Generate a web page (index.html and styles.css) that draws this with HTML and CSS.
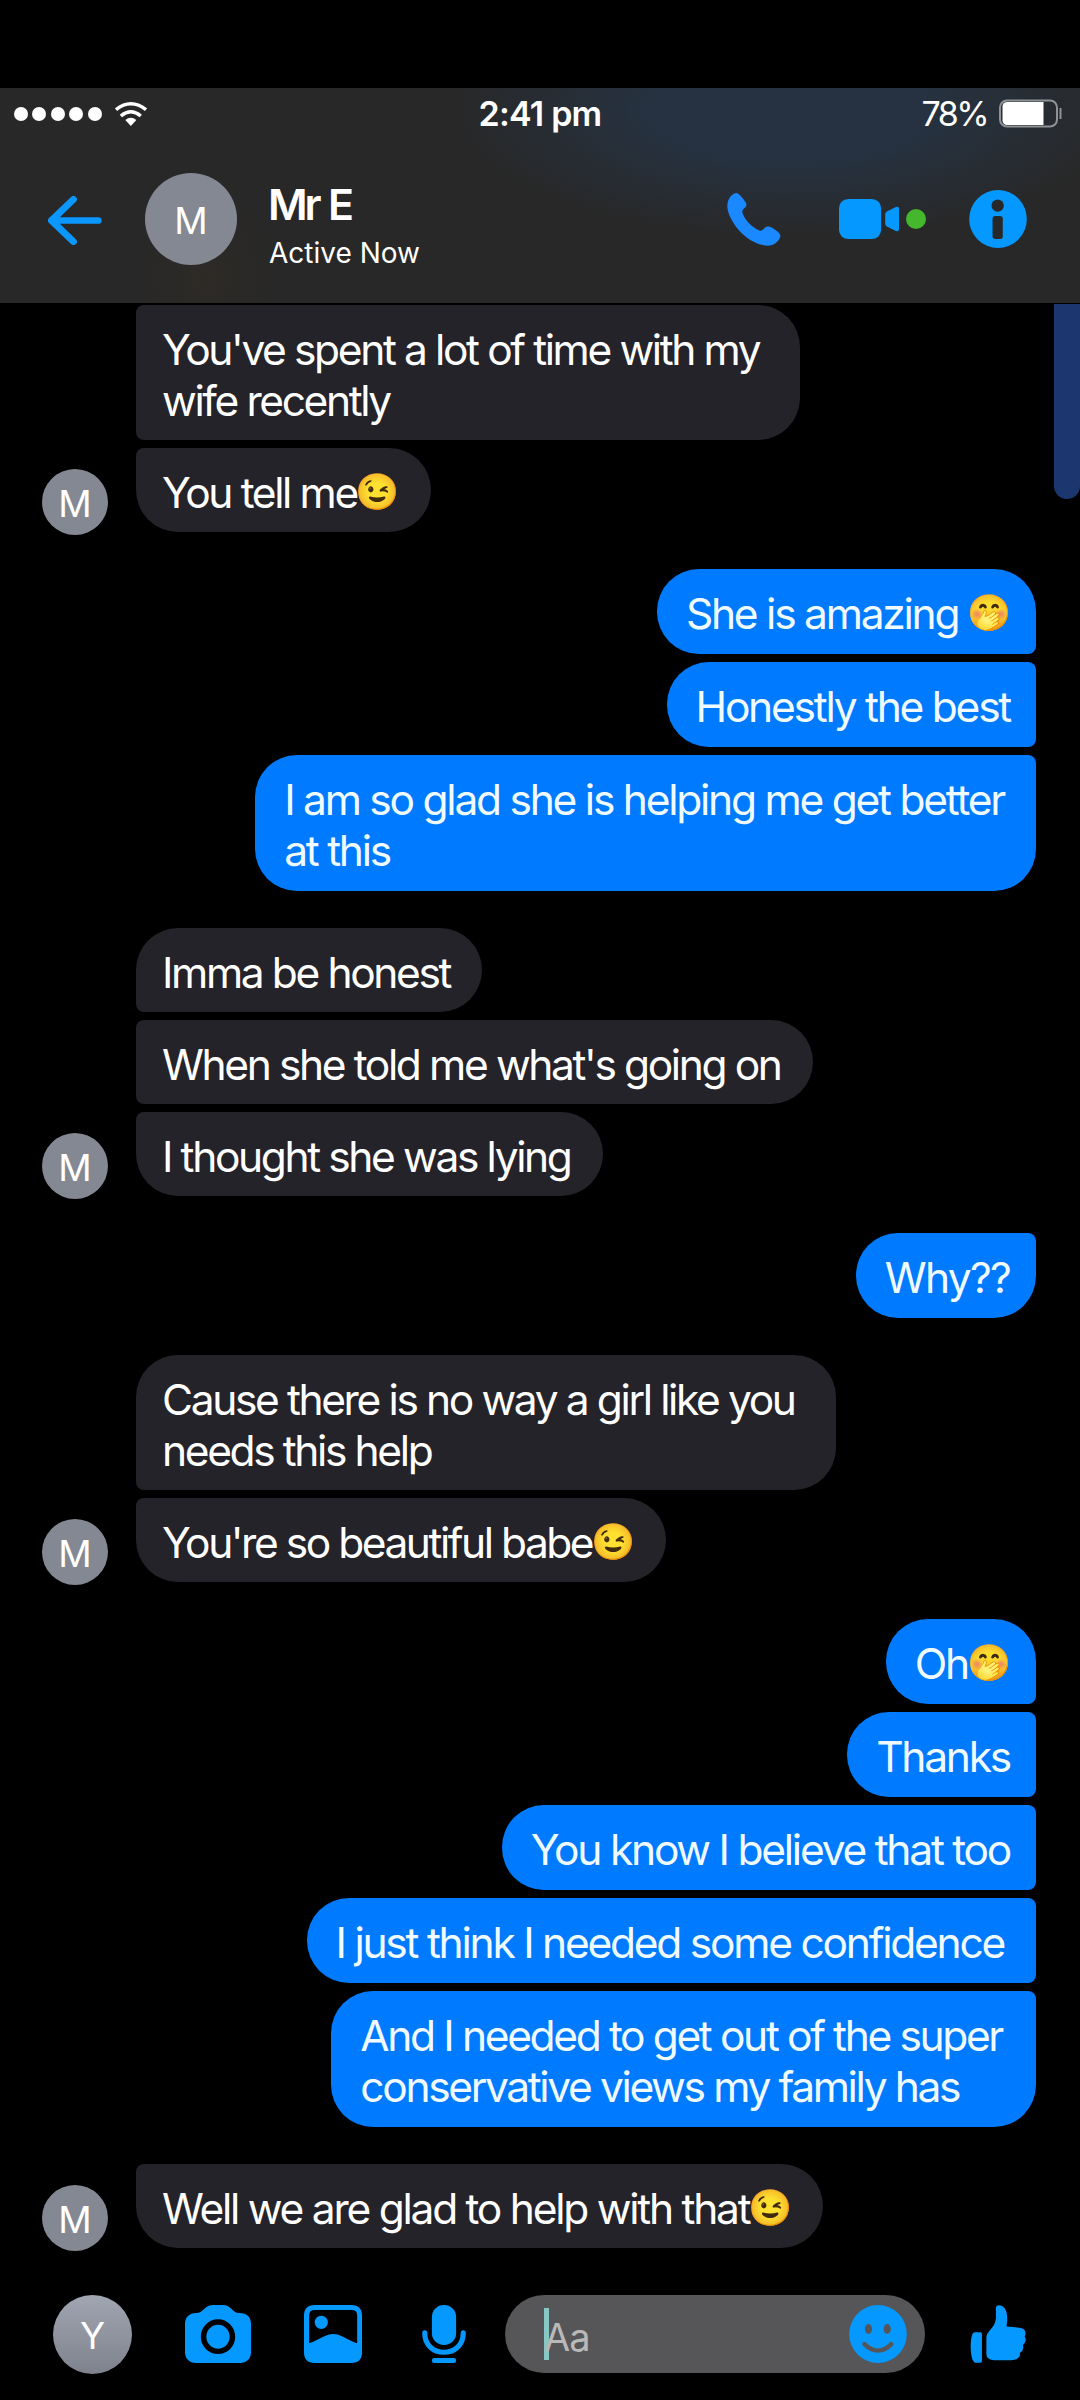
FILE: index.html
```html
<!DOCTYPE html>
<html lang="en">
<head>
<meta charset="utf-8">
<title>Mr E</title>
<link rel="stylesheet" href="styles.css">
</head>
<body>
<div class="phone">
  <header class="header">
    <div class="status">
      <div class="status__left">
        <div class="signal"><i></i><i></i><i></i><i></i><i></i></div>
        <svg class="wifi" viewBox="334 62 93 72" preserveAspectRatio="none" fill="none" stroke="#fff" stroke-width="10">
          <path d="M337 85Q380 50 424 85"/>
          <path d="M351 104Q380 79 409 104"/>
          <path d="M364 116Q380 103 396 116L380 134Z" fill="#fff" stroke="none"/>
        </svg>
      </div>
      <div class="status__time">2:41 pm</div>
      <div class="status__right">
        <span class="percent">78%</span>
        <svg class="battery" viewBox="0 0 64 30" fill="none">
          <rect x="1" y="1.5" width="57" height="26" rx="7" stroke="#8f9396" stroke-width="2"/>
          <path d="M8 3H44.500V26H8A4.500 4.500 0 0 1 3.500 21.500V7.500A4.500 4.500 0 0 1 8 3Z" fill="#fff"/>
          <path d="M61.500 9V20" stroke="#8f9396" stroke-width="2"/>
        </svg>
      </div>
    </div>
    <div class="contact">
      <svg class="back" viewBox="139 348 157 146" preserveAspectRatio="none" fill="none" stroke="#0a97ff" stroke-width="20" stroke-linecap="round" stroke-linejoin="round">
        <path d="M213 358L149 421L213 484M149 421H285"/>
      </svg>
      <div class="avatar avatar--large">M</div>
      <div class="contact__text">
        <div class="contact__name">Mr E</div>
        <div class="contact__state">Active Now</div>
      </div>
      <svg class="call" viewBox="542 336 156 160" preserveAspectRatio="none" fill="#1a88ff">
        <path d="M543 375C543 350 560 336 570 336C577 337 592 357 597 366C600 373 597 378 592 382C587 386 585 391 587 397C595 420 615 440 636 449C641 451 645 448 649 443C655 437 662 436 668 439C680 445 692 455 696 463C699 470 685 495 662 495C620 495 580 460 560 425C548 404 543 388 543 375Z"/>
      </svg>
      <svg class="video" viewBox="868 357 174 121" preserveAspectRatio="none" fill="#0598ff">
        <rect x="868" y="357" width="122" height="121" rx="27"/>
        <path d="M1007 395L1033 381Q1042 378 1042 387V448Q1042 457 1033 454L1007 440Q1002 437 1002 431V404Q1002 398 1007 395Z"/>
      </svg>
      <i class="online"></i>
      <svg class="info" viewBox="1245 330 170 174" preserveAspectRatio="none">
        <ellipse cx="1330" cy="417" rx="84.500" ry="87" fill="#0598ff"/>
        <ellipse cx="1329" cy="377" rx="18" ry="18.500" fill="#272829"/>
        <rect x="1314" y="408" width="30" height="69" rx="8" fill="#272829"/>
      </svg>
    </div>
  </header>

  <main class="thread">
    <i class="scrollbar"></i>
    <section class="group group--in">
      <div class="bubble bubble--joined bubble--wide">You've spent a lot of time with my<br>wife recently</div>
      <div class="bubble">You tell me<span class="emoji">😉</span></div>
      <div class="avatar">M</div>
    </section>
    <section class="group group--out">
      <div class="bubble">She is amazing <span class="emoji">🤭</span></div>
      <div class="bubble">Honestly the best</div>
      <div class="bubble bubble--wide">I am so glad she is helping me get better<br>at this</div>
    </section>
    <section class="group group--in">
      <div class="bubble">Imma be honest</div>
      <div class="bubble">When she told me what's going on</div>
      <div class="bubble">I thought she was lying</div>
      <div class="avatar">M</div>
    </section>
    <section class="group group--out">
      <div class="bubble bubble--loose">Why??</div>
    </section>
    <section class="group group--in">
      <div class="bubble bubble--wide">Cause there is no way a girl like you<br>needs this help</div>
      <div class="bubble bubble--snug">You're so beautiful babe<span class="emoji">😉</span></div>
      <div class="avatar">M</div>
    </section>
    <section class="group group--out">
      <div class="bubble">Oh<span class="emoji">🤭</span></div>
      <div class="bubble">Thanks</div>
      <div class="bubble">You know I believe that too</div>
      <div class="bubble bubble--wide">I just think I needed some confidence</div>
      <div class="bubble bubble--wide bubble--snug">And I needed to get out of the super<br>conservative views my family has</div>
    </section>
    <section class="group group--in">
      <div class="bubble bubble--loose">Well we are glad to help with that<span class="emoji">😉</span></div>
      <div class="avatar">M</div>
    </section>
  </main>

  <footer class="composer">
    <div class="avatar avatar--me">Y</div>
    <svg class="camera" viewBox="537 138 192 174" preserveAspectRatio="none">
      <path fill="#0598ff" d="M570 162C592 162 592 138 620 138H647C673 138 673 162 695 162C718 162 729 175 729 195V280C729 300 716 312 697 312H569C550 312 537 300 537 280V195C537 175 549 162 570 162Z"/>
      <ellipse cx="633" cy="233" rx="42" ry="44" fill="#0598ff" stroke="#000" stroke-width="16"/>
    </svg>
    <svg class="photo" viewBox="883 138 168 174" preserveAspectRatio="none" fill="#0598ff">
      <path fill-rule="evenodd" d="M914 138H1020Q1051 138 1051 170V280Q1051 312 1020 312H914Q883 312 883 280V170Q883 138 914 138ZM914 153Q898 153 898 169V253C925 244 945 225 967 225C992 225 1008 244 1037 253V169Q1037 153 1021 153Z"/>
      <ellipse cx="933" cy="190" rx="19" ry="20"/>
    </svg>
    <svg class="mic" viewBox="1225 138 129 174" preserveAspectRatio="none" fill="#0598ff">
      <rect x="1254" y="138" width="71" height="120" rx="35"/>
      <path d="M1233 221C1233 258 1258 280 1289 280C1321 280 1346 258 1346 221" fill="none" stroke="#0598ff" stroke-width="15" stroke-linecap="round"/>
      <rect x="1254" y="297" width="71" height="15" rx="7"/>
    </svg>
    <div class="field">
      <span class="field__hint">Aa</span>
      <svg class="smile" viewBox="897 135 170 174" preserveAspectRatio="none">
        <ellipse cx="982" cy="222" rx="84.500" ry="87" fill="#0598ff"/>
        <g fill="#565658"><ellipse cx="954" cy="207" rx="10.500" ry="15"/><ellipse cx="1009" cy="207" rx="10.500" ry="15"/></g>
        <path d="M942 252Q960 271 982 272Q1004 271 1021 252" fill="none" stroke="#565658" stroke-width="13" stroke-linecap="round"/>
      </svg>
    </div>
    <svg class="like" viewBox="1251 137 164 176" preserveAspectRatio="none" fill="#0598ff">
      <path d="M1264 220H1281Q1286 220 1286 226V306Q1286 312 1281 312H1266C1249 308 1249 222 1264 220Z"/>
      <path d="M1327 145C1328 136 1338 136 1346 141C1361 151 1362 176 1358 202C1376 203 1390 204 1400 207C1412 210 1417 220 1411 233C1417 241 1414 252 1406 258C1409 270 1404 279 1397 282C1399 298 1389 304 1362 305H1330C1309 305 1299 300 1299 286V238C1299 218 1315 212 1323 193C1330 177 1326 163 1327 145Z"/>
    </svg>
  </footer>
</div>
</body>
</html>
```
FILE: styles.css
```css
* { box-sizing: border-box; }

body {
  margin: 0;
  background: #000;
  color: #fff;
  font-family: Inter, "Liberation Sans", sans-serif;
}

.phone {
  display: flex;
  flex-direction: column;
  width: 1080px;
  height: 2400px;
  padding-top: 88px;
  overflow: hidden;
}

svg { display: block; flex: none; }

/* Header */
.header {
  flex: none;
  height: 215px;
  background:
    radial-gradient(ellipse 75px 110px at 205px 190px, #2d2a26, rgba(45, 42, 38, 0)),
    radial-gradient(ellipse 340px 130px at 790px 20px, #263241 0, #263241 40%, rgba(38, 50, 65, 0) 100%),
    #282828;
}

.status {
  display: grid;
  grid-template-columns: 1fr auto 1fr;
  align-items: center;
  height: 52px;
  padding: 0 17px 0 17px;
  font-size: 34px;
  line-height: 52px;
}

.status__left, .status__right, .signal { display: flex; align-items: center; }
.status__left { margin-left: -3px; }
.signal { gap: 4.4px; }
.signal i { width: 14px; height: 14px; border-radius: 50%; background: #fff; }
.wifi { width: 32px; height: 24px; margin-left: 13px; }
.status__time { font-weight: 600; letter-spacing: -0.8px; }
.status__right { justify-content: flex-end; }
.percent { letter-spacing: -2.6px; margin-right: 12px; }
.battery { width: 64px; height: 30px; }

.contact { display: flex; align-items: center; height: 158px; padding-left: 48px; }
.back { width: 54px; height: 49px; margin-top: 2px; }
.contact .avatar { margin-left: 43px; }
.contact__text { width: 455px; margin-left: 33px; padding-top: 11px; }
.contact__name { margin-left: -2px; font-size: 43px; font-weight: 600; line-height: 52px; letter-spacing: -3.2px; word-spacing: 2px; }
.contact__state { margin-left: -1px; font-size: 28px; line-height: 36px; margin-top: 5px; }
.call { width: 54px; height: 53px; margin-left: 2px; }
.video { width: 60px; height: 40px; margin-left: 58px; }
.online { width: 20px; height: 20px; margin-left: 7px; border-radius: 50%; background: #45b72c; }
.info { width: 58px; height: 58px; margin-left: 43px; }

.avatar {
  display: flex;
  flex: none;
  align-items: center;
  justify-content: center;
  width: 66px;
  height: 66px;
  padding-top: 3px;
  border-radius: 50%;
  background: #848893;
  font-size: 37px;
  line-height: 1;
}
.avatar--large { width: 92px; height: 92px; }
.avatar--me { width: 79px; height: 79px; padding-top: 2px; background: linear-gradient(#a0a6b2, #7e828c); }

/* Conversation */
.thread {
  position: relative;
  display: flex;
  flex: none;
  flex-direction: column;
  gap: 37px;
  height: 1945px;
  padding: 2px 44px 0 136px;
}

.scrollbar {
  position: absolute;
  top: 1px;
  right: 0;
  width: 26px;
  height: 195px;
  border-radius: 0 0 13px 13px;
  background: #1c3770;
}

.group { position: relative; display: flex; flex-direction: column; gap: 8px; }
.group--in { align-items: flex-start; }
.group--out { align-items: flex-end; }
.group > .avatar { position: absolute; left: -94px; bottom: -3px; }

.bubble {
  font-size: 42.5px;
  line-height: 51px;
  white-space: nowrap;
}

.group--in .bubble {
  padding: 19px 32px 14px 26px;
  border-radius: 8px 42px 42px 8px;
  background: #25232a;
  letter-spacing: -2.38px;
}
.group--in .bubble:first-child:not(:nth-last-child(2)):not(.bubble--joined) { border-top-left-radius: 42px; }
.group--in .bubble:nth-last-child(2) { border-bottom-left-radius: 42px; }
.group--in .bubble--wide { padding-right: 41px; }
.group--in .bubble--snug { letter-spacing: -2.47px; }
.group--in .bubble--loose { letter-spacing: -2.25px; }

.group--out .bubble {
  padding: 19px 26px 15px 29px;
  border-radius: 42px 8px 8px 42px;
  background: #007aff;
  color: #f0fbff;
  letter-spacing: -2.24px;
}
.group--out .bubble:first-child:not(:last-child) { border-top-right-radius: 42px; }
.group--out .bubble:last-child { border-bottom-right-radius: 42px; }
.group--out .bubble--wide { padding-right: 32px; }
.group--out .bubble--snug { padding-right: 34px; letter-spacing: -2.36px; }
.group--out .bubble--loose { letter-spacing: -1.7px; }

.emoji {
  display: inline-block;
  width: 43px;
  height: 51px;
  margin-left: -1px;
  font-family: "Noto Color Emoji", sans-serif;
  font-size: 35.5px;
  line-height: 51px;
  letter-spacing: 0;
  vertical-align: top;
}

/* Composer */
.composer { display: flex; flex: none; align-items: center; height: 172px; padding-left: 53px; }
.camera { width: 66px; height: 58px; margin-left: 53px; }
.photo { width: 58px; height: 58px; margin-left: 53px; }
.mic { width: 44px; height: 58px; margin-left: 60px; }
.field {
  display: flex;
  align-items: center;
  justify-content: space-between;
  width: 420px;
  height: 78px;
  margin-left: 39px;
  padding: 0 18px 0 39px;
  border-radius: 39px;
  background: #565658;
}
.field__hint {
  height: 52px;
  padding-top: 4px;
  background: linear-gradient(90deg, #88c8c4 5px, transparent 5px);
  color: #b9b9b9;
  font-size: 38px;
  line-height: 50px;
  letter-spacing: -1px;
}
.smile { width: 58px; height: 58px; }
.like { width: 56px; height: 58px; margin-left: 45px; }
```
